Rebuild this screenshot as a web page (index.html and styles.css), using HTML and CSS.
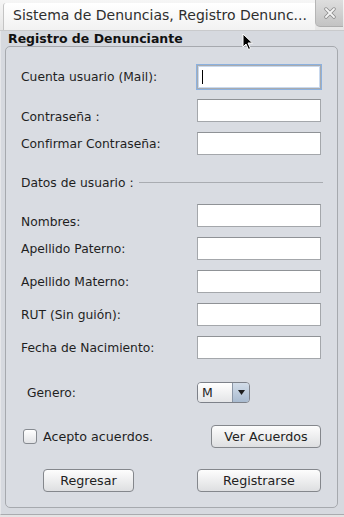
FILE: index.html
```html
<!DOCTYPE html>
<html lang="es">
<head>
<meta charset="utf-8">
<title>Registro de Denunciante</title>
<link rel="stylesheet" href="styles.css">
</head>
<body>
<div class="window">
  <div class="titlebar">
    <div class="tab"><span class="title">Sistema de Denuncias, Registro Denunc...</span></div>
    <div class="close">
      <svg width="12" height="12" viewBox="0 0 12 12"><path d="M2 2 L10 10 M10 2 L2 10" stroke="#8a8a8a" stroke-width="3.4" stroke-linecap="round"/><path d="M2 2 L10 10 M10 2 L2 10" stroke="#f4f4f4" stroke-width="1.9" stroke-linecap="round"/></svg>
    </div>
  </div>
  <div class="content">
    <div class="heading">Registro de Denunciante</div>
    <div class="panel">
      <div class="row first">
        <span class="label">Cuenta usuario (Mail):</span>
        <div class="field focused"><span class="caret"></span></div>
      </div>
      <div class="row second">
        <span class="label low">Contraseña :</span>
        <div class="field"></div>
      </div>
      <div class="row">
        <span class="label">Confirmar Contraseña:</span>
        <div class="field"></div>
      </div>
      <div class="row separator">
        <span class="label">Datos de usuario :</span>
        <span class="line"></span>
      </div>
      <div class="row after-sep">
        <span class="label low">Nombres:</span>
        <div class="field"></div>
      </div>
      <div class="row">
        <span class="label">Apellido Paterno:</span>
        <div class="field"></div>
      </div>
      <div class="row">
        <span class="label">Apellido Materno:</span>
        <div class="field"></div>
      </div>
      <div class="row">
        <span class="label">RUT (Sin guión):</span>
        <div class="field"></div>
      </div>
      <div class="row">
        <span class="label">Fecha de Nacimiento:</span>
        <div class="field"></div>
      </div>
      <div class="row combo-row">
        <span class="label genero">Genero:</span>
        <div class="combo">
          <span class="combo-value">M</span>
          <span class="combo-arrow"><svg width="7" height="5" viewBox="0 0 7 5"><path d="M0 0 H7 L3.5 5 Z" fill="#1e1e1e"/></svg></span>
        </div>
      </div>
      <div class="row check-row">
        <span class="check-wrap"><span class="checkbox"></span><span class="check-label">Acepto acuerdos.</span></span>
        <div class="button ver">Ver Acuerdos</div>
      </div>
      <div class="row button-row">
        <div class="button regresar">Regresar</div>
        <div class="button registrarse">Registrarse</div>
      </div>
    </div>
  </div>
  <svg class="cursor" width="12" height="18" viewBox="0 0 12 18"><path d="M1 1 L1 14 L4 11 L6.5 16.5 L8.5 15.5 L6 10 L10.5 10 Z" fill="#000" stroke="#fff" stroke-width="1" stroke-linejoin="round"/></svg>
</div>
</body>
</html>
```

FILE: styles.css
```css
* { box-sizing: border-box; }
html, body { margin: 0; padding: 0; }
body {
  width: 344px;
  height: 517px;
  background: #e4e4e4;
  font-family: "DejaVu Sans", "Liberation Sans", sans-serif;
  color: #1f1f1f;
  overflow: hidden;
}
.window {
  position: relative;
  width: 344px;
  height: 517px;
  display: flex;
  flex-direction: column;
}
.titlebar {
  height: 31px;
  display: flex;
  background: linear-gradient(#f6f6f6, #e6e6e6);
  border-bottom: 1px solid #c9cacc;
}
.tab {
  flex: 1;
  margin-left: 3px;
  margin-top: 3px;
  border-left: 1px solid #c4c4c4;
  border-top-left-radius: 3px;
  background: linear-gradient(#ffffff, #f2f2f2);
  padding-left: 9px;
  overflow: hidden;
}
.title {
  display: block;
  margin-top: 4px;
  font-size: 14px;
  line-height: 16px;
  color: #2e2e2e;
  white-space: nowrap;
}
.close {
  width: 28px;
  height: 27px;
  margin-right: 1px;
  background: linear-gradient(#dedede, #c3c3c3);
  border-left: 1px solid #b5b5b5;
  border-bottom: 1px solid #adadad;
  border-bottom-left-radius: 5px;
  display: flex;
  align-items: center;
  justify-content: center;
}
.content {
  flex: 1;
  background: #d6d9df;
  display: flex;
  flex-direction: column;
  padding: 0 6px 6px 4px;
  border-left: 1px solid #e6e7ea;
  border-bottom: 1px solid #a9abaf;
  margin-bottom: 2px;
}
.heading {
  font-weight: bold;
  font-size: 12.5px;
  line-height: 15px;
  height: 15px;
  padding-left: 3px;
  color: #111;
}
.panel {
  border: 1px solid #a6a9ae;
  border-radius: 5px;
  background: #d9dce2;
  display: flex;
  flex-direction: column;
  padding: 0 16px 15px 15px;
  height: 462px;
}
.row {
  display: flex;
  align-items: center;
  justify-content: space-between;
  height: 23px;
  margin-top: 10px;
}
.row.first { margin-top: 18px; height: 24px; }
.row.second { margin-top: 10px; }
.row.separator { margin-top: 16px; }
.row.after-sep { margin-top: 10px; }
.row.combo-row { margin-top: 23px; height: 21px; }
.row.check-row { margin-top: 22px; }
.row.button-row { margin-top: 21px; padding-left: 22px; }
.label {
  font-size: 12.3px;
  line-height: 14px;
  white-space: nowrap;
}
.label.low { margin-top: 12px; }
.label.genero { margin-left: 6px; }
.field {
  width: 124px;
  height: 23px;
  background: #fff;
  border: 1px solid #a4a7ab;
  border-top-color: #8f9296;
  position: relative;
}
.field.focused {
  height: 24px;
  border: 1px solid #a8abaf;
  box-shadow: 0 0 0 1px #8cb1df, inset 0 0 0 1px #c9d9ee;
}
.caret {
  position: absolute;
  left: 4px;
  top: 4px;
  width: 1px;
  height: 14px;
  background: #000;
}
.separator .line {
  flex: 1;
  height: 1px;
  background: #a9acb1;
  margin-left: 5px;
  margin-right: -2px;
  margin-top: -1px;
}
.combo {
  width: 53px;
  height: 21px;
  border: 1px solid #7d8189;
  border-radius: 4px;
  display: flex;
  overflow: hidden;
  margin-right: 71px;
}
.combo-value {
  flex: 1;
  font-size: 12.5px;
  line-height: 19px;
  padding-left: 4px;
  background: linear-gradient(#ffffff, #e4e5e7);
}
.combo-arrow {
  width: 17px;
  background: linear-gradient(#d3dde9, #a9bbd0);
  border-left: 1px solid #8a96a6;
  display: flex;
  align-items: center;
  justify-content: center;
}
.check-wrap {
  display: flex;
  align-items: center;
  margin-left: 2px;
}
.checkbox {
  width: 14px;
  height: 15px;
  border: 1px solid #868a90;
  border-radius: 3px;
  background: linear-gradient(#ffffff, #e2e3e6);
  margin-right: 6px;
}
.check-label {
  font-size: 12.7px;
  line-height: 14px;
}
.button {
  height: 23px;
  border: 1px solid #84878c;
  border-radius: 4px;
  background: linear-gradient(#fdfdfd, #dedfe1);
  font-size: 12.7px;
  line-height: 21px;
  text-align: center;
  color: #222;
}
.button.ver { width: 110px; }
.button.regresar { width: 91px; }
.button.registrarse { width: 124px; }
.cursor {
  position: absolute;
  left: 242px;
  top: 33px;
}
```
